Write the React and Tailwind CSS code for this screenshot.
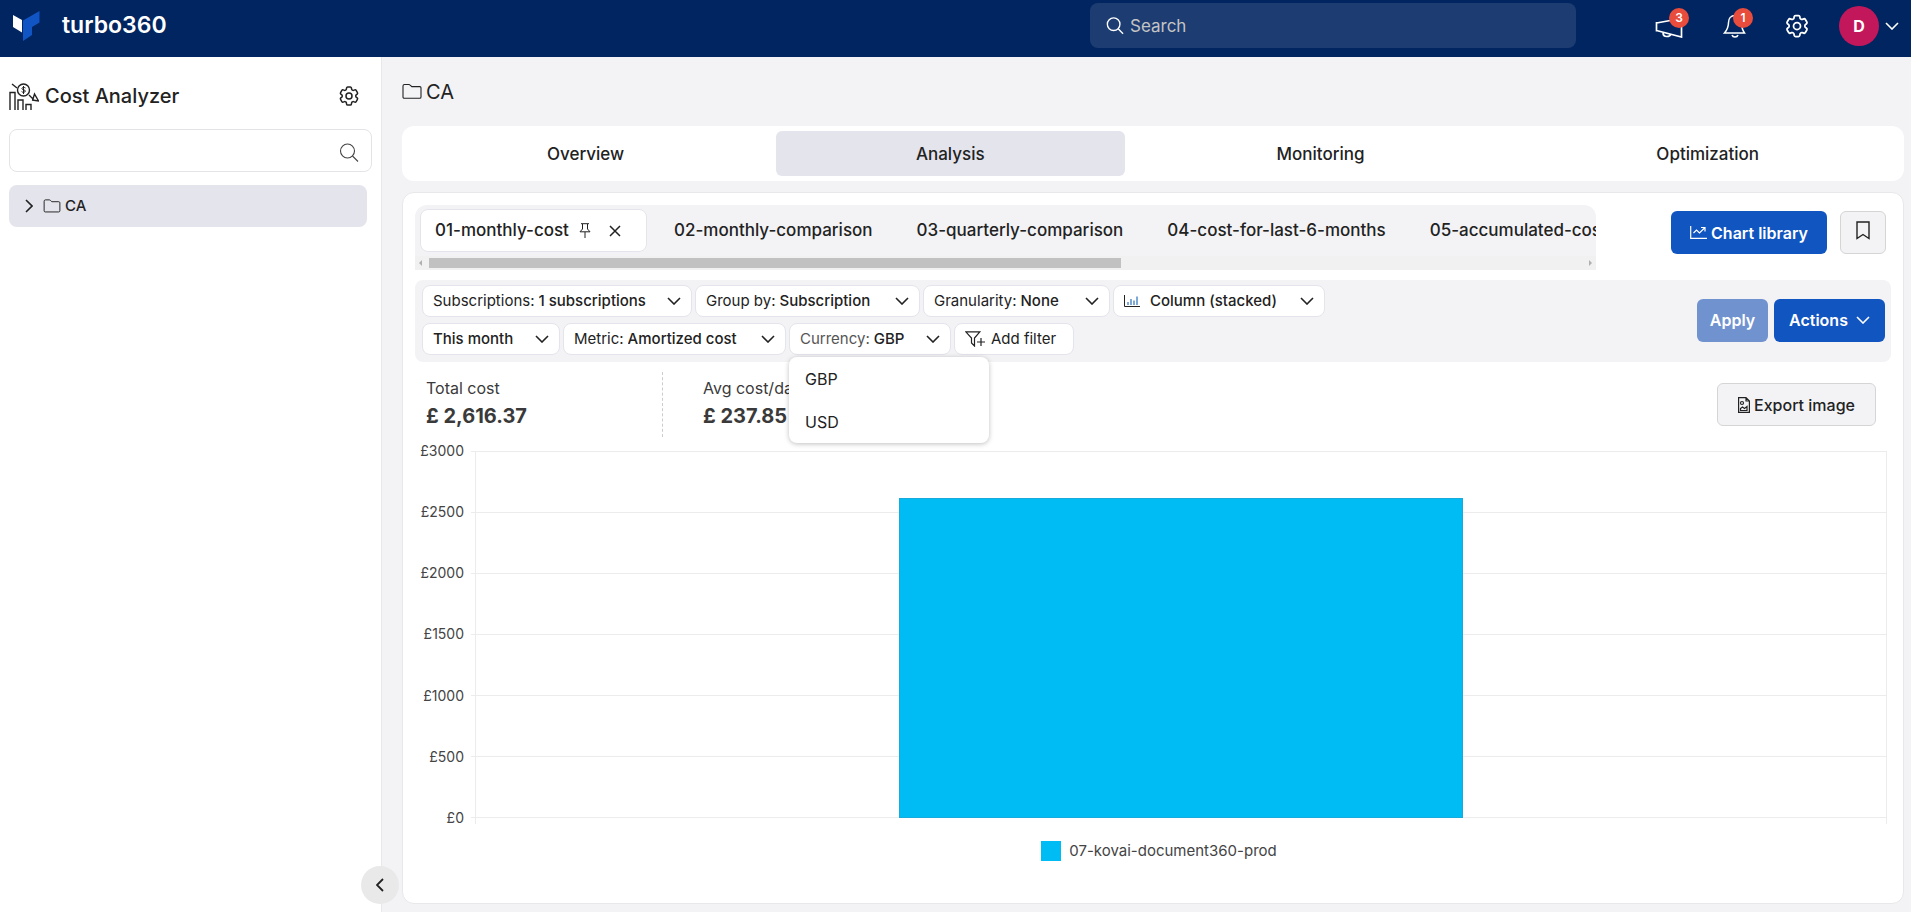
import React, { useState } from 'react';
import { HiOutlineCog6Tooth } from 'react-icons/hi2';

const chartTabs = ['02-monthly-comparison', '03-quarterly-comparison', '04-cost-for-last-6-months', '05-accumulated-cost'];
const pageTabs = ['Overview', 'Analysis', 'Monitoring', 'Optimization'];
const currencies = ['GBP', 'USD'];
const yTicks = [3000, 2500, 2000, 1500, 1000, 500, 0];
const totalCost = 2616.37;

const Icon = ({ children, className, viewBox = '0 0 20 20', width = 1.3 }) => (
  <svg
    className={`shrink-0 ${className}`}
    viewBox={viewBox}
    fill="none"
    stroke="currentColor"
    strokeWidth={width}
    aria-hidden="true"
  >
    {children}
  </svg>
);

const ChevronDown = ({ className = 'w-[14px] h-2' }) => (
  <Icon className={`pointer-events-none ${className}`} viewBox="0 0 14 8" width={1.6}>
    <path d="M1 1l6 6 6-6" />
  </Icon>
);

const Folder = ({ className }) => (
  <Icon className={className} viewBox="0 0 20 16" width={1.1}>
    <path d="M1 13.500v-11C1 1.700 1.500 1 2.500 1h4.300c.6 0 1 .2 1.400.6l1.600 1.500h8c.8 0 1.200.5 1.200 1.200v9.200c0 .8-.5 1.300-1.300 1.300H2.200c-.7 0-1.200-.5-1.200-1.300z" />
  </Icon>
);

const Magnifier = ({ className, width }) => (
  <Icon className={className} width={width}>
    <circle cx="8.500" cy="8" r="7" />
    <path d="M13.500 13l5.500 5.500" />
  </Icon>
);

const Logo = () => (
  <svg className="h-[30px] w-7 shrink-0" viewBox="0 0 28 30" aria-hidden="true">
    <path d="M1 4l9 5v12.500L1 16z" fill="#fff" />
    <path d="M11 9.500L27.500 0v11.500L20 16v8l-9 6z" fill="#1155c4" />
  </svg>
);

const FilterChip = ({ label, value, name, className, icon }) => (
  <label
    className={`flex h-8 items-center rounded-lg border border-[#e4e4ec] bg-white px-2.5 text-[#222] ${className}`}
  >
    {icon}
    {label && <span className="mr-1 whitespace-nowrap">{label}</span>}
    <select
      aria-label={name}
      className="min-w-0 flex-1 appearance-none truncate bg-transparent font-medium outline-none"
      defaultValue={value}
    >
      <option>{value}</option>
    </select>
    <ChevronDown />
  </label>
);

const Header = () => (
  <header className="flex h-[57px] items-center bg-[#002560] pb-1.5 pl-3 pr-3 text-white">
    <Logo />
    <span className="ml-[22px] text-[23px] font-semibold">turbo360</span>
    <label className="ml-auto flex h-[45px] w-[486px] items-center rounded-lg bg-[#1d3d72] px-4">
      <Magnifier className="size-[18px]" width={1.5} />
      <input
        type="text"
        placeholder="Search"
        aria-label="Search"
        className="ml-1.5 flex-1 bg-transparent pt-0.5 text-[17px] outline-none placeholder:text-[#c4c4c4]"
      />
    </label>
    <div className="ml-[79px] flex items-center">
      <button className="relative" aria-label="Announcements">
        <Icon className="h-6 w-7" viewBox="0 0 28 24" width={1.7}>
          <path d="M1.500 8v9.500M1.500 9L26.500 4.500V23L1.500 16.500M8 18.500c0 2.500 1.500 4 3.800 4 2 0 3.700-.8 4.200-2.500" />
        </Icon>
        <span className="absolute -top-1.5 left-3.5 flex size-5 items-center justify-center rounded-full bg-[#e74c3c] text-xs font-semibold">3</span>
      </button>
      <button className="relative ml-10" aria-label="Notifications">
        <Icon className="size-6" viewBox="0 0 24 24" width={1.5}>
          <path d="M12 1.500c-4 0-6.500 3-6.500 7 0 5-1 7-4 10.500h20c-2.500-3.500-3-5.500-3-10.500 0-4-2.500-7-6.500-7zM9 21c.5 1.500 1.500 2 3 2s2.500-.5 3-2" />
        </Icon>
        <span className="absolute -top-1.5 left-2.5 flex size-5 items-center justify-center rounded-full bg-[#e74c3c] text-xs font-semibold">1</span>
      </button>
      <button className="ml-9" aria-label="Settings">
        <HiOutlineCog6Tooth className="size-7" />
      </button>
      <button className="ml-7 flex items-center" aria-label="Account">
        <span className="flex size-10 items-center justify-center rounded-full bg-[#c2185b] font-bold">D</span>
        <ChevronDown className="ml-1.5 h-2 w-[14px]" />
      </button>
    </div>
  </header>
);

const Sidebar = () => (
  <aside className="relative w-[382px] shrink-0 border-r border-[#e8e8ea] bg-white px-[9px] pt-6">
    <div className="flex h-[30px] items-center">
      <Icon className="h-[27px] w-[30px]" viewBox="0 0 30 27" width={1.4}>
        <path d="M1 27V9.500h5V27M9 27V17h5v10M17 27v-5.500h5V27M3 1l5 4M20 12l4 4 1.500-5 4 7-6.500-1" />
        <circle cx="14.500" cy="7" r="6" />
        <path d="M16.500 5c-.5-.8-3.600-1-3.600.6 0 1.500 3.500.9 3.500 2.500 0 1.500-3.200 1.500-3.800.4M14.500 3v8" strokeWidth="1" />
      </Icon>
      <h1 className="ml-1.5 text-[20px] font-medium">Cost Analyzer</h1>
      <button className="ml-auto mr-[11px]" aria-label="Cost Analyzer settings">
        <HiOutlineCog6Tooth className="size-6" />
      </button>
    </div>
    <label className="mt-[18px] flex h-[43px] items-center rounded-lg border border-[#e4e4e8] px-3 pt-1">
      <input type="text" aria-label="Filter cost groups" className="min-w-0 flex-1 outline-none" />
      <Magnifier className="size-5 text-[#444]" width={1.1} />
    </label>
    <nav className="mr-[5px] mt-[13px]">
      <a href="#ca" className="flex h-[42px] items-center rounded-lg bg-[#e4e4ec] pl-4 text-[15px] font-medium">
        <Icon className="h-[14px] w-2" viewBox="0 0 8 14" width={1.6}>
          <path d="M1 1l6 6-6 6" />
        </Icon>
        <Folder className="ml-2.5 h-[14px] w-[18px]" />
        <span className="ml-1">CA</span>
      </a>
    </nav>
    <button
      aria-label="Collapse sidebar"
      className="absolute -right-[18px] bottom-2 flex size-[38px] items-center justify-center rounded-full bg-[#e9e9ea]"
    >
      <Icon className="h-[14px] w-2" viewBox="0 0 8 14" width={1.8}>
        <path d="M7 1L1 7l6 6" />
      </Icon>
    </button>
  </aside>
);

const ChartTabStrip = () => (
  <div className="min-w-0 flex-1 overflow-hidden rounded-t-xl bg-[#f3f3f6]">
    <div className="flex h-[51px] items-center whitespace-nowrap pl-[5px] text-[17px] font-medium">
      <div className="flex h-[43px] w-[227px] shrink-0 items-center rounded-lg border border-[#e4e4ec] bg-white pl-3.5">
        <button className="w-[134px] text-left">01-monthly-cost</button>
        <button className="ml-2.5" aria-label="Pin chart">
          <Icon className="h-[15px] w-3" viewBox="0 0 12 15" width={1}>
            <path d="M2 .7h8M3.500 1v5L1 8.800h10L8.500 6V1M6 9v6" />
          </Icon>
        </button>
        <button className="ml-[18px]" aria-label="Close chart">
          <Icon className="size-3" viewBox="0 0 12 12" width={1.5}>
            <path d="M1 1l10 10M11 1L1 11" />
          </Icon>
        </button>
      </div>
      <div className="flex gap-11 pl-[27px]">
        {chartTabs.map((tab) => (
          <button key={tab}>{tab}</button>
        ))}
      </div>
    </div>
    {/* Scrollbar */}
    <div className="flex h-[14px] items-center justify-between bg-[#f1f1f1] px-1 text-[#b0b0b0]">
      <svg className="h-[6px] w-[3px]" viewBox="0 0 3 6" fill="currentColor"><path d="M3 0v6L0 3z" /></svg>
      <div className="ml-[7px] mr-auto h-2.5 w-[59%] bg-[#c1c1c1]"></div>
      <svg className="h-[6px] w-[3px]" viewBox="0 0 3 6" fill="currentColor"><path d="M0 0v6l3-3z" /></svg>
    </div>
  </div>
);

const CostChart = () => (
  <div className="flex min-h-[400px] flex-1 flex-col pt-[14px] text-[#444]">
    <div className="flex flex-1 pr-1">
      <div className="-my-[10px] flex w-[49px] flex-col justify-between text-right text-sm leading-5">
        {yTicks.map((tick) => (
          <span key={tick}>£{tick}</span>
        ))}
      </div>
      <div className="relative ml-[7px] flex-1">
        <div className="flex h-full flex-col justify-between">
          {yTicks.map((tick) => (
            <div key={tick} className="h-px bg-[#ececec]"></div>
          ))}
        </div>
        <div className="absolute -bottom-1.5 left-1 right-0 top-0 border-x border-[#ececec]"></div>
        {/* Stacked column */}
        <div className="absolute inset-0 flex items-end justify-center pl-1">
          <div
            className="w-2/5 border border-[#18aadb] bg-[#00bcf5]"
            style={{ height: `${(totalCost / yTicks[0]) * 100}%` }}
          ></div>
        </div>
      </div>
    </div>
    <div className="flex h-[85px] items-start justify-center gap-2 pl-3 pt-[23px] text-[15px] leading-5">
      <span className="size-5 bg-[#00bcf5]"></span>
      07-kovai-document360-prod
    </div>
  </div>
);

const App = () => {
  const [activeTab, setActiveTab] = useState('Analysis');
  const [currency, setCurrency] = useState('GBP');
  const [currencyOpen, setCurrencyOpen] = useState(true);

  return (
    <div className="flex min-h-screen flex-col bg-[#f3f3f6] font-['Inter',sans-serif] text-base text-[#222]">
      <Header />
      <div className="flex flex-1">
        <Sidebar />
        <main className="flex min-w-0 flex-1 flex-col pb-2 pl-5 pr-[7px]">
          <h2 className="flex h-[69px] items-center text-[20px]">
            <Folder className="h-[17px] w-5" />
            <span className="ml-1">CA</span>
          </h2>

          {/* Page tabs */}
          <div className="flex gap-3 rounded-xl bg-white p-[5px] text-[17px] font-medium">
            {pageTabs.map((tab) => (
              <button
                key={tab}
                onClick={() => setActiveTab(tab)}
                className={`h-[45px] flex-auto rounded-md pt-0.5 ${activeTab === tab ? 'bg-[#e4e4ec]' : ''}`}
              >
                {tab}
              </button>
            ))}
          </div>

          <section className="mt-[11px] flex flex-1 flex-col rounded-xl border border-[#e8e8ea] bg-white px-3 pt-3">
            <div className="flex pr-[5px]">
              <ChartTabStrip />
              <div className="ml-[75px] mt-1.5 flex items-start gap-[13px]">
                <button className="flex h-[43px] w-[156px] items-center justify-center gap-1 rounded-md bg-[#1155c0] font-semibold text-white">
                  <Icon className="h-[13px] w-[17px]" viewBox="0 0 17 13" width={1.2}>
                    <path d="M.7 0v12.300H17M3.500 7l3-3 3 3L15 1.500M11 1.500h4v4" />
                  </Icon>
                  Chart library
                </button>
                <button aria-label="Bookmark" className="flex h-[43px] w-[46px] items-center justify-center rounded-md border border-[#d5d5d5] bg-[#f3f3f6] pb-1">
                  <Icon className="h-[19px] w-[14px]" viewBox="0 0 14 19" width={1.4}>
                    <path d="M1 1h12v16.500l-6-4-6 4z" />
                  </Icon>
                </button>
              </div>
            </div>

            {/* Filters */}
            <div className="mt-2.5 flex items-center rounded-lg bg-[#f3f3f6] px-1.5 pb-1.5 pt-1 text-[15px]">
              <div className="flex flex-1 flex-col gap-[6px] py-px pl-px">
                <div className="flex gap-[3px]">
                  <FilterChip label="Subscriptions:" value="1 subscriptions" name="Subscriptions" className="w-[270px]" />
                  <FilterChip label="Group by:" value="Subscription" name="Group by" className="w-[225px]" />
                  <FilterChip label="Granularity:" value="None" name="Granularity" className="w-[187px]" />
                  <FilterChip
                    value="Column (stacked)"
                    name="Chart type"
                    className="w-[212px]"
                    icon={
                      <Icon className="mr-2.5 h-3 w-4" viewBox="0 0 16 12" width={1}>
                        <path d="M.5 0v11.500H16" />
                        <path d="M4 10V7M7 10V4M10 10V5.500M13 10V1.500" stroke="#3b7cc0" strokeWidth="1.300" />
                      </Icon>
                    }
                  />
                </div>
                <div className="flex gap-[3px]">
                  <FilterChip value="This month" name="Period" className="w-[138px]" />
                  <FilterChip label="Metric:" value="Amortized cost" name="Metric" className="w-[223px]" />
                  <div className="relative">
                    <button
                      aria-haspopup="listbox"
                      aria-expanded={currencyOpen}
                      onClick={() => setCurrencyOpen(!currencyOpen)}
                      className="flex h-8 w-[162px] items-center rounded-lg border border-[#e4e4ec] bg-white px-2.5"
                    >
                      <span className="text-[#555]">Currency:</span>
                      <span className="ml-1 mr-auto font-medium">{currency}</span>
                      <ChevronDown />
                    </button>
                    {currencyOpen && (
                      <ul
                        role="listbox"
                        aria-label="Currency"
                        className="absolute left-0 top-[34px] z-10 w-[200px] rounded-lg bg-white text-base shadow-[0_1px_5px_rgba(0,0,0,0.25)]"
                      >
                        {currencies.map((item) => (
                          <li
                            key={item}
                            role="option"
                            aria-selected={item === currency}
                            onClick={() => setCurrency(item)}
                            className="flex h-[43px] items-center px-4"
                          >
                            {item}
                          </li>
                        ))}
                      </ul>
                    )}
                  </div>
                  <button className="flex h-8 w-[120px] items-center gap-1.5 rounded-lg border border-[#e4e4ec] bg-white px-2.5">
                    <Icon className="h-4 w-5" viewBox="0 0 20 16" width={1.2}>
                      <path d="M.8.8h14L9.500 7v8L6.500 12V7zM12 11h8M16 7v8" />
                    </Icon>
                    Add filter
                  </button>
                </div>
              </div>
              <div className="flex gap-1.5 text-base font-semibold text-white">
                <button className="h-[43px] w-[71px] rounded-md bg-[#7093d0]">Apply</button>
                <button className="flex h-[43px] w-[111px] items-center justify-center gap-2 rounded-md bg-[#1155c0]">
                  Actions
                  <ChevronDown />
                </button>
              </div>
            </div>

            {/* Totals */}
            <div className="mt-2.5 flex text-[#3a3a3a]">
              <div className="flex h-[65px] w-[248px] flex-col border-r border-dashed border-[#ccc] pl-[11px] pt-1">
                <span className="leading-6">Total cost</span>
                <strong className="text-[20px] leading-8">£ 2,616.37</strong>
              </div>
              <div className="flex h-[65px] flex-col pl-10 pt-1">
                <span className="leading-6">Avg cost/day</span>
                <strong className="text-[20px] leading-8">£ 237.85</strong>
              </div>
              <button className="ml-auto mr-[15px] mt-[11px] flex h-[43px] w-[159px] items-center justify-center gap-1 rounded-md border border-[#d5d5d5] bg-[#f3f3f6] font-medium text-[#222]">
                <Icon className="h-4 w-3" viewBox="0 0 12 16" width={1.2}>
                  <path d="M.6.6h7.400l3.400 3.400v11.400H.6zM8 .6V4h3.400M2.500 13.500v-2l2-1.500 2 1.500 2.500-2v4z" />
                  <circle cx="4" cy="6" r="1.500" />
                </Icon>
                Export image
              </button>
            </div>

            <CostChart />
          </section>
        </main>
      </div>
    </div>
  );
};

export default App;
